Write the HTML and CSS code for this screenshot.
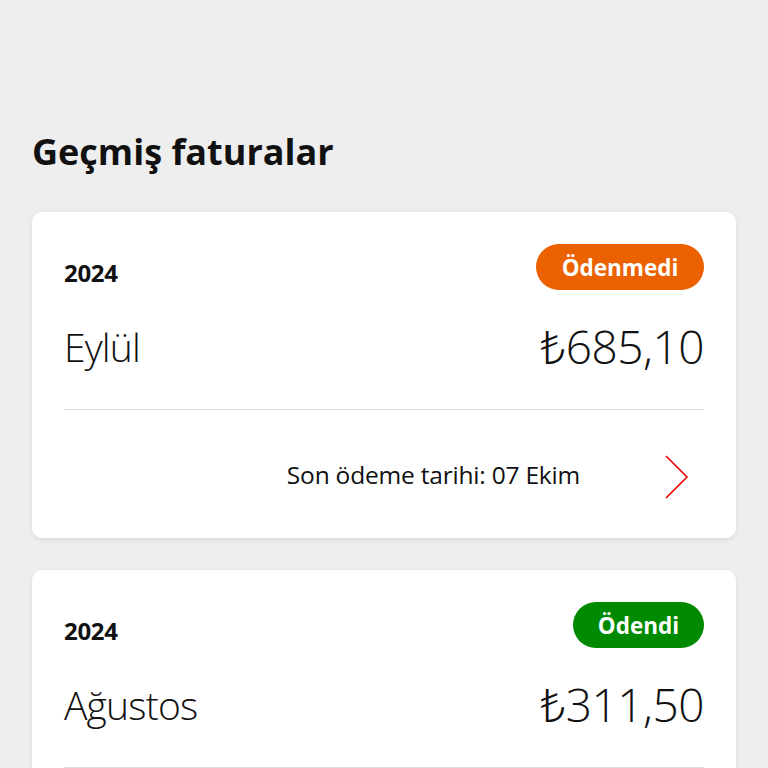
FILE: index.html
```html
<!DOCTYPE html>
<html lang="tr">
<head>
<meta charset="utf-8">
<link rel="stylesheet" href="styles.css">
</head>
<body>
<main class="page">
  <h1 class="title">Geçmiş faturalar</h1>
  <section class="card">
    <div class="row head">
      <span class="year">2024</span>
      <span class="badge unpaid">Ödenmedi</span>
    </div>
    <div class="row main">
      <span class="month">Eylül</span>
      <span class="amount">₺685,10</span>
    </div>
    <div class="divider"></div>
    <div class="foot">
      <span class="due">Son ödeme tarihi: 07 Ekim</span>
      <svg class="chev" width="26" height="46" viewBox="0 0 26 46"><path d="M2 2 L23 23 L2 44" fill="none" stroke="#e60000" stroke-width="1.6"/></svg>
    </div>
  </section>
  <section class="card">
    <div class="row head">
      <span class="year">2024</span>
      <span class="badge paid">Ödendi</span>
    </div>
    <div class="row main">
      <span class="month">Ağustos</span>
      <span class="amount">₺311,50</span>
    </div>
    <div class="divider"></div>
    <div class="foot empty"></div>
  </section>
</main>
</body>
</html>
```
FILE: styles.css
```css
html, body {
  margin: 0;
  padding: 0;
  background: #eeeeee;
  font-family: "Open Sans", "Noto Sans", sans-serif;
  color: #111;
}
.page {
  padding: 126px 32px 0 32px;
  display: flex;
  flex-direction: column;
}
.title {
  margin: 0 0 34px 0;
  font-size: 36px;
  font-weight: 700;
  line-height: 52px;
  letter-spacing: 0;
}
.card {
  background: #fff;
  border-radius: 10px;
  box-shadow: 0 2px 6px rgba(0,0,0,0.08);
  padding: 32px 32px 0 32px;
  margin-bottom: 32px;
}
.row {
  display: flex;
  justify-content: space-between;
  align-items: center;
}
.head { height: 46px; }
.year {
  font-size: 24px;
  font-weight: 700;
  padding-top: 10px;
  letter-spacing: -0.3px;
}
.badge {
  height: 46px;
  border-radius: 23px;
  color: #fff;
  font-size: 22.5px;
  font-weight: 700;
  display: flex;
  align-items: center;
  justify-content: center;
  box-sizing: border-box;
}
.unpaid { background: #eb6100; width: 168px; }
.paid { background: #008a00; width: 131px; }
.main {
  margin-top: 32px;
  height: 48px;
}
.month {
  font-size: 39px;
  font-weight: 300;
  letter-spacing: -0.8px;
}
.amount {
  font-size: 46px;
  font-weight: 300;
  letter-spacing: -0.5px;
}
.divider {
  margin-top: 39px;
  height: 1px;
  background: #dddddd;
}
.foot {
  height: 128px;
  display: flex;
  justify-content: flex-end;
  align-items: center;
  padding-right: 14px;
  gap: 84px;
}
.due {
  font-size: 24.5px;
  font-weight: 400;
  letter-spacing: -0.2px;
}
.chev { display: block; margin-top: 6px; }
```
